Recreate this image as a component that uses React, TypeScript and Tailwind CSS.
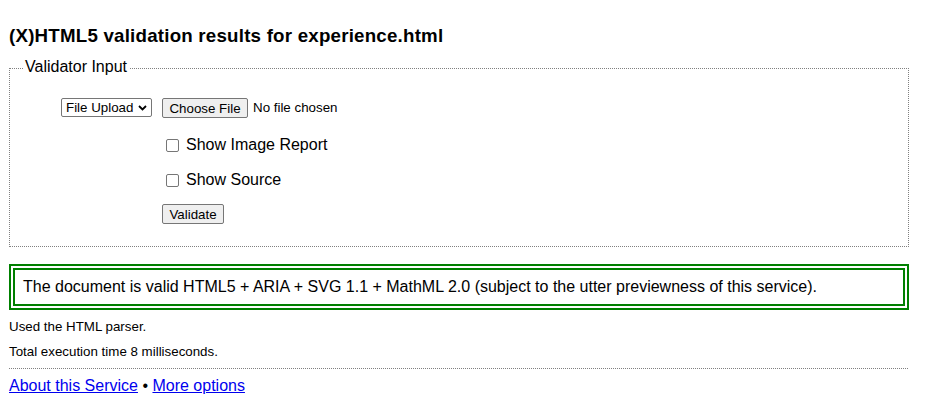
export default function App() {
  return (
    <div className="min-h-[402px] bg-white text-black font-['Liberation_Sans',Arial,sans-serif]">
      <div className="ml-[9px] w-[900px] pt-[25px]">
        <h1 className="text-[18.72px] font-bold leading-[22px] tracking-[0.22px]">
          (X)HTML5 validation results for experience.html
        </h1>

        {/* Validator input form */}
        <fieldset className="mt-[11px] border border-dotted border-[#808080]">
          <legend className="ml-[13px] px-[2px] pb-[3px] text-[16px] leading-[18px]">Validator Input</legend>
          <div className="pt-[19px] pb-[22px]">
            <div className="flex items-start">
              <div className="ml-[51px] flex h-[19px] w-[91px] items-center justify-between rounded-[2px] border border-[#767676] bg-white pl-[4px] pr-[4px] text-[13.33px] leading-[15px]">
                <span>File Upload</span>
                <svg width="9" height="6" viewBox="0 0 9 6" className="mt-[1px]">
                  <path d="M1 1 L4.5 4.5 L8 1" fill="none" stroke="#000" strokeWidth="1.8" />
                </svg>
              </div>
              <button className="ml-[10px] flex h-[20px] w-[86px] items-center justify-center rounded-[2px] border border-[#767676] bg-[#efefef] text-[13.33px] leading-[15px]">
                Choose File
              </button>
              <span className="ml-[5px] text-[13.33px] leading-[20px]">No file chosen</span>
            </div>

            <label className="mt-[18px] flex h-[18px] items-center text-[16px] leading-[18px]">
              <span className="ml-[156px] h-[13px] w-[13px] rounded-[2px] border border-[#767676] bg-white" />
              <span className="ml-[7px]">Show Image Report</span>
            </label>
            <label className="mt-[17px] flex h-[18px] items-center text-[16px] leading-[18px]">
              <span className="ml-[156px] h-[13px] w-[13px] rounded-[2px] border border-[#767676] bg-white" />
              <span className="ml-[7px]">Show Source</span>
            </label>

            <button className="ml-[152px] mt-[15px] flex h-[20px] w-[62px] items-center justify-center rounded-[2px] border border-[#767676] bg-[#efefef] text-[13.33px] leading-[15px]">
              Validate
            </button>
          </div>
        </fieldset>

        {/* Result */}
        <div className="mt-[17px] border-[6px] border-double border-[#008000] px-[8px] py-[8px] text-[16px] leading-[18px]">
          The document is valid HTML5 + ARIA + SVG 1.1 + MathML 2.0 (subject to the utter previewness of this service).
        </div>

        <p className="mt-[9px] text-[13.33px] leading-[16px]">Used the HTML parser.</p>
        <p className="mt-[9px] text-[13.33px] leading-[16px]">Total execution time 8 milliseconds.</p>

        <div className="mt-[8px] w-[899px] border-t border-dotted border-[#808080]" />

        <div className="mt-[8px] text-[16px] leading-[18px]">
          <a href="#" className="text-[#0000ee] underline">About this Service</a>
          {' • '}
          <a href="#" className="text-[#0000ee] underline">More options</a>
        </div>
      </div>
    </div>
  )
}
